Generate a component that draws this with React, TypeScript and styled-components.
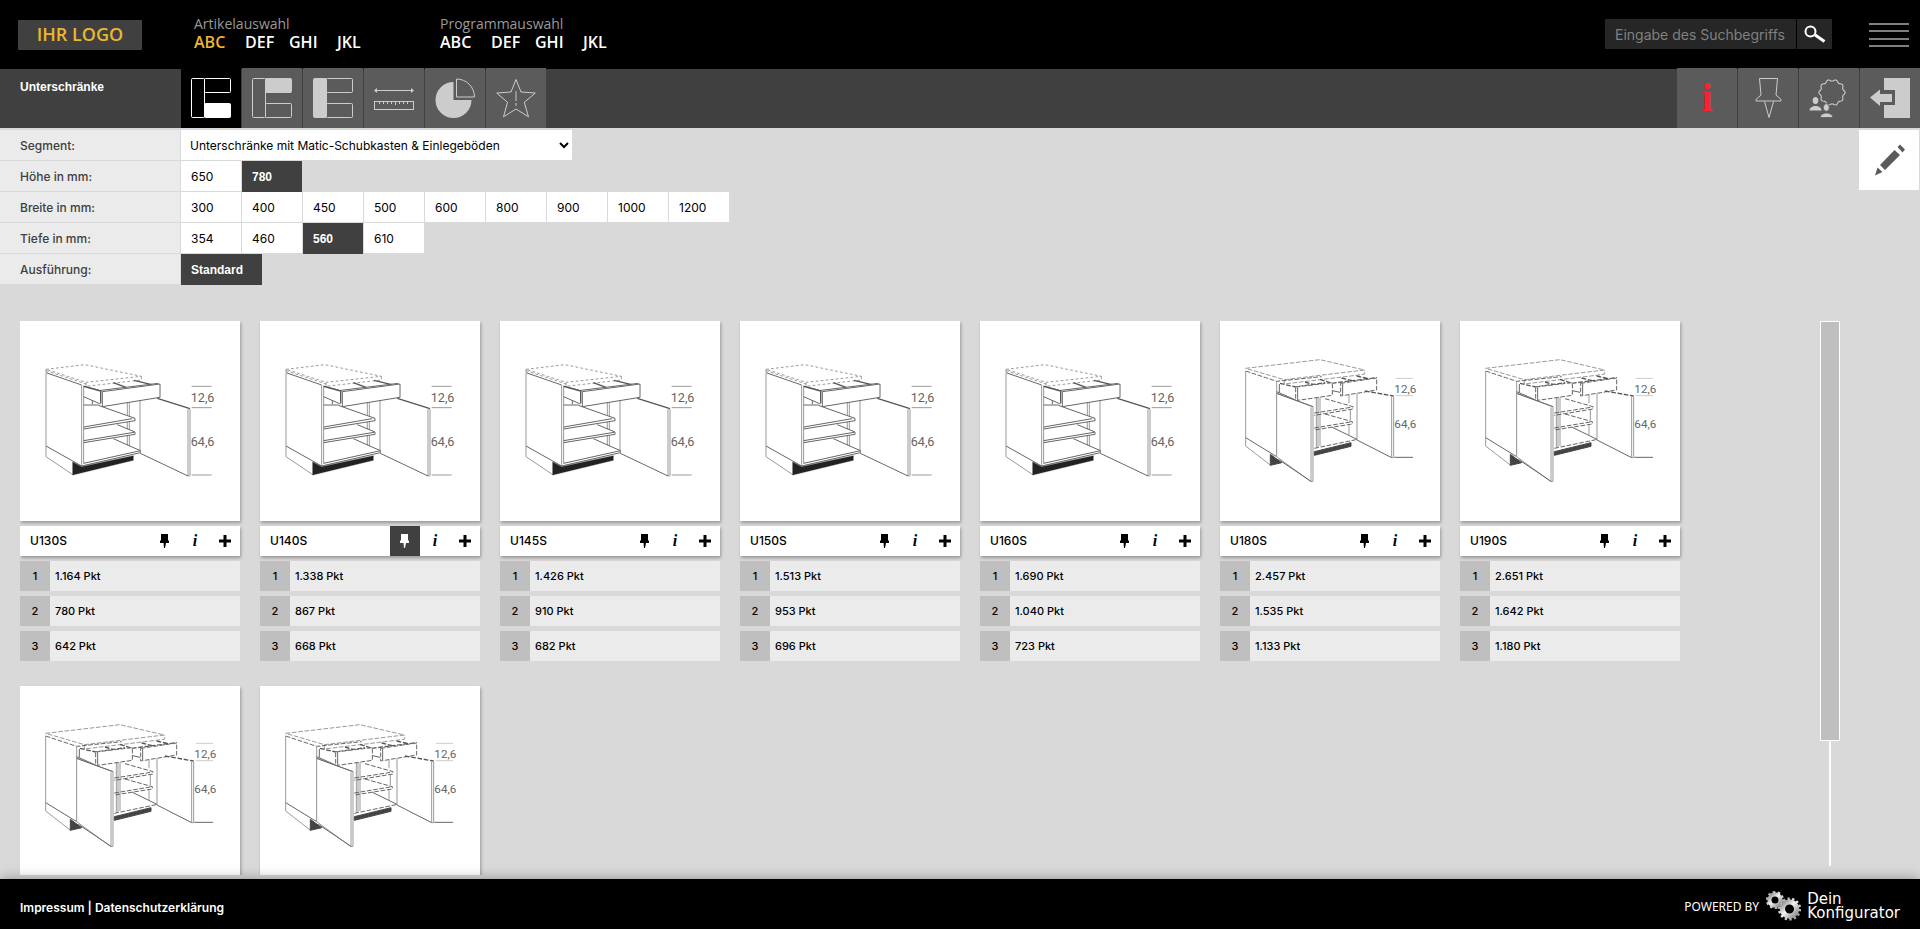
import React, { useState } from 'react';
import styled, { createGlobalStyle } from 'styled-components';

const GlobalStyle = createGlobalStyle`
  *, *::before, *::after { box-sizing: border-box; }
  body {
    margin: 0;
    background: #d9d9d9;
    color: #000;
    font-family: Inter, "Liberation Sans", sans-serif;
    font-size: 12px;
  }
  button, input, select { font: inherit; color: inherit; border: 0; border-radius: 0; margin: 0; }
  button { padding: 0; background: none; cursor: pointer; }
  svg { display: block; }
`;

const Page = styled.div`
  display: flex;
  flex-direction: column;
  height: 100vh;
  min-height: 500px;
`;

/* ---------- header ---------- */

const Header = styled.header`
  display: flex;
  align-items: flex-start;
  height: 68px;
  flex: none;
  padding: 0 11px 0 18px;
  background: #000;
  font-family: "Open Sans", sans-serif;
`;

const Logo = styled.a`
  width: 124px;
  height: 30px;
  margin: 20px 52px 0 0;
  background: #404040;
  color: #edb72c;
  font-size: 18px;
  font-weight: 600;
  line-height: 29px;
  text-align: center;
  text-decoration: none;
`;

const NavGroup = styled.nav`
  width: 246px;
  padding-top: 15px;
`;

const NavTitle = styled.div`
  color: #999;
  font-size: 14px;
  line-height: 18px;
`;

const NavLinks = styled.div`
  display: grid;
  grid-template-columns: 51px 44px 48px auto;
`;

const NavLink = styled.a<{ $active?: boolean }>`
  color: ${(p) => (p.$active ? '#edb72c' : '#fff')};
  font-size: 16px;
  font-weight: 600;
  line-height: 18px;
  text-decoration: none;
`;

const Search = styled.form`
  display: flex;
  gap: 1px;
  margin: 19px 37px 0 auto;
`;

const SearchInput = styled.input`
  width: 191px;
  height: 30px;
  padding: 0 10px;
  background: #262626;
  color: #fff;
  font-family: Inter, "Liberation Sans", sans-serif;
  font-size: 14px;
  &::placeholder { color: #808080; opacity: 1; }
`;

const SearchButton = styled.button`
  display: grid;
  place-items: center;
  width: 35px;
  height: 30px;
  background: #262626;
`;

const MenuButton = styled.button`
  display: flex;
  flex-direction: column;
  justify-content: space-between;
  width: 40px;
  height: 24px;
  margin-top: 23px;
`;

const MenuLine = styled.span`
  height: 2px;
  background: #7f7f7f;
`;

/* ---------- toolbar ---------- */

const Toolbar = styled.div`
  display: flex;
  flex: none;
  height: 60px;
  border-top: 1px solid #000;
  background: #404040;
`;

const Section = styled.h1`
  width: 181px;
  margin: 0;
  padding: 10px 0 0 20px;
  color: #fff;
  font-family: "Liberation Sans", Arial, sans-serif;
  font-size: 12px;
  line-height: 16px;
`;

const Tiles = styled.div`
  display: flex;
  gap: 1px;
  margin-top: -1px;
  & + & { margin-left: auto; }
`;

const Tile = styled.button<{ $active?: boolean }>`
  display: grid;
  place-items: center;
  width: 60px;
  height: 60px;
  background: ${(p) => (p.$active ? '#000' : '#5b5b5b')};
  color: ${(p) => (p.$active ? '#fff' : '#ccc')};
`;

const RedInfo = styled.span`
  color: #ff1f2e;
  font: bold 40px/40px "Liberation Serif", serif;
`;

/* ---------- filters ---------- */

const FilterArea = styled.div`
  display: flex;
  flex: none;
  align-items: flex-start;
  justify-content: space-between;
  padding: 2px 1px 0 0;
`;

const Filters = styled.div`
  display: flex;
  flex-direction: column;
  gap: 1px;
`;

const FilterRow = styled.div`
  display: flex;
  gap: 1px;
  height: 30px;
`;

const FilterLabel = styled.label`
  width: 180px;
  padding-left: 20px;
  background: #ebebeb;
  color: #404040;
  font-weight: 500;
  line-height: 31px;
`;

const SegmentSelect = styled.select`
  width: 391px;
  padding: 0 0 0 5px;
  background: #fff;
`;

const Option = styled.button<{ $active: boolean }>`
  min-width: 60px;
  height: ${(p) => (p.$active ? 31 : 30)}px;
  padding: 0 19px 0 10px;
  background: ${(p) => (p.$active ? '#404040' : '#fff')};
  color: ${(p) => (p.$active ? '#fff' : '#000')};
  font-family: ${(p) => (p.$active ? '"Liberation Sans", Arial, sans-serif' : 'inherit')};
  font-weight: ${(p) => (p.$active ? 'bold' : 'inherit')};
  text-align: left;
`;

const EditButton = styled.button`
  display: grid;
  place-items: center;
  width: 60px;
  height: 60px;
  background: #fff;
`;

/* ---------- products ---------- */

const Content = styled.main`
  display: flex;
  flex: 1;
  min-height: 0;
  padding: 37px 80px 0 20px;
`;

const CardList = styled.div`
  display: flex;
  flex: 1;
  flex-wrap: wrap;
  align-content: flex-start;
  gap: 25px 20px;
  margin-bottom: 4px;
  padding-right: 20px;
  overflow: hidden;
`;

const Card = styled.article`
  display: flex;
  flex-direction: column;
  gap: 5px;
  width: 220px;
  font-size: 11px;
  font-weight: 500;
`;

const Picture = styled.div`
  height: 200px;
  background: #fff;
  box-shadow: 1px 2px 3px rgba(0, 0, 0, 0.3);
`;

const CardTitle = styled.div`
  display: flex;
  height: 30px;
  padding-left: 10px;
  background: #fff;
  box-shadow: 1px 2px 3px rgba(0, 0, 0, 0.3);
`;

const CardName = styled.h2`
  flex: 1;
  margin: 0;
  font-size: 12px;
  font-weight: inherit;
  line-height: 30px;
`;

const CardButton = styled.button<{ $active?: boolean }>`
  display: grid;
  place-items: center;
  width: 30px;
  height: 30px;
  background: ${(p) => (p.$active ? '#404040' : 'transparent')};
  color: ${(p) => (p.$active ? '#fff' : '#000')};
`;

const ItalicInfo = styled.span`
  font: italic bold 16px/20px "Liberation Serif", serif;
`;

const Price = styled.div`
  display: flex;
  height: 30px;
  background: #ebebeb;
  line-height: 30px;
`;

const PriceIndex = styled.span`
  width: 30px;
  margin-right: 5px;
  background: #bfbfbf;
  text-align: center;
`;

const ScrollTrack = styled.div`
  display: flex;
  flex-direction: column;
  align-items: center;
  width: 20px;
  margin-bottom: 13px;
`;

const ScrollThumb = styled.div`
  width: 20px;
  height: 77%;
  border: 1px solid #fff;
  background: #bfbfbf;
`;

const ScrollLine = styled.div`
  flex: 1;
  width: 2px;
  background: #fff;
`;

/* ---------- footer ---------- */

const Footer = styled.footer`
  display: flex;
  flex: none;
  align-items: center;
  justify-content: space-between;
  height: 50px;
  padding: 0 20px;
  background: #000;
  box-shadow: 0 0 12px rgba(0, 0, 0, 0.35);
  color: #fff;
`;

const Legal = styled.nav`
  padding-top: 7px;
  font-size: 12px;
  font-weight: 600;
`;

const LegalLink = styled.a`
  color: #fff;
  text-decoration: none;
`;

const Powered = styled.div`
  display: flex;
  align-items: center;
  gap: 6px;
  padding-top: 4px;
  font: 12px "Noto Sans", sans-serif;
`;

const Brand = styled.span`
  display: flex;
  flex-direction: column;
  font: 15px/14px "DejaVu Sans", sans-serif;
`;

/* ---------- icons ---------- */

const Layout = ({ filled }: { filled: 'left' | 'top' | 'bottom' }) => {
  const fill = (name: string) => (name === filled ? 'currentColor' : 'none');
  return (
    <svg width="40" height="40" viewBox="0 0 40 40" stroke="currentColor" aria-hidden="true">
      <rect x="0.5" y="0.5" width="13" height="39" rx="1" fill={fill('left')} />
      <rect x="13.5" y="0.5" width="26" height="14" rx="1" fill={fill('top')} />
      <rect x="13.5" y="25.5" width="26" height="14" rx="1" fill={fill('bottom')} />
    </svg>
  );
};

const RulerIcon = () => (
  <svg width="40" height="40" viewBox="0 0 40 40" fill="none" stroke="currentColor" aria-hidden="true">
    <path d="M2 12.5h36" />
    <path d="M0 12.5l3-2.5v5zM40 12.5l-3-2.5v5z" fill="currentColor" stroke="none" />
    <rect x="0.5" y="23.5" width="39" height="8" />
    <path d="M5.5 24v2M9.5 24v2M13.5 24v2M17.5 24v2M21.5 24v3M25.5 24v2M29.5 24v2M33.5 24v2" />
  </svg>
);

const PieIcon = () => (
  <svg width="40" height="40" viewBox="0 0 40 40" aria-hidden="true">
    <path d="M18.500 4a18 18 0 1 0 18 18h-18z" fill="currentColor" />
    <path d="M21.500 1v18h18A18 18 0 0 0 21.500 1z" fill="none" stroke="currentColor" />
  </svg>
);

const StarIcon = () => (
  <svg width="40" height="40" viewBox="0 0 40 40" fill="none" stroke="currentColor" strokeLinejoin="round" aria-hidden="true">
    <path d="M20 1.500l5 12.500 14.300 1-11 9.300 4.200 14.500L20 31 7.500 38.800l4-14.500L.7 15 15 14z" />
    <path d="M20 13v10M20 25v3" strokeWidth="1.500" opacity="0.650" />
  </svg>
);

const PinOutline = () => (
  <svg width="40" height="40" viewBox="0 0 40 40" fill="none" stroke="currentColor" strokeLinejoin="round" aria-hidden="true">
    <path d="M11.500 .5h18l-1.500 16.500 5 4.500v1.500H8v-1.500l5-4.500zM16.500 23.500l4.500 16 4.500-16" />
  </svg>
);

const CommunityIcon = () => {
  const points = Array.from({ length: 100 }, (_, i) => {
    const angle = (i / 100) * Math.PI * 2;
    const radius = 12.2 + Math.cos(angle * 10) * 0.9;
    return `${(23 + radius * Math.cos(angle)).toFixed(2)},${(14.5 + radius * Math.sin(angle)).toFixed(2)}`;
  }).join(' ');
  return (
    <svg width="40" height="40" viewBox="0 0 40 40" aria-hidden="true">
      <polygon points={points} fill="none" stroke="currentColor" strokeWidth="1.100" />
      <g fill="currentColor">
        <ellipse cx="6.500" cy="22.500" rx="2.800" ry="3.500" />
        <path d="M.5 32.500c0-6 12-6 12 0z" />
        <g stroke="#5b5b5b" strokeWidth="0.800">
          <ellipse cx="17.300" cy="29.500" rx="3" ry="3.800" />
          <path d="M11.300 39.500c0-6 12.400-6 12.400 0z" />
        </g>
      </g>
    </svg>
  );
};

const ExitIcon = () => (
  <svg width="40" height="40" viewBox="0 0 40 40" fill="currentColor" aria-hidden="true">
    <path d="M14 0h26v40H14V27h11V12H14z" />
    <path d="M0 19.500L10 11.500v4.500h12v8H10v4z" />
  </svg>
);

const PencilIcon = () => (
  <svg width="40" height="40" viewBox="0 0 40 40" fill="#5b5b5b" aria-hidden="true">
    <path d="M25.500 10l5.500 5-15 15L11 25zM28.500 7l2.500-2.500L36 9.500l-2.500 3zM8.500 27.500l5 4.500-7.500 3.500z" />
  </svg>
);

const SearchIcon = () => (
  <svg width="22" height="18" viewBox="0 0 22 18" fill="none" stroke="#fff" aria-hidden="true">
    <circle cx="6.500" cy="6.500" r="5" strokeWidth="2" />
    <path d="M10.500 9.500L20.500 16.500" strokeWidth="3" />
  </svg>
);

const PinIcon = () => (
  <svg width="10" height="14" viewBox="0 0 10 14" fill="currentColor" aria-hidden="true">
    <path d="M1 0h7v6l1 1v2H6l-1 5h-1L3.500 9H0V7l1-1z" />
  </svg>
);

const PlusIcon = () => (
  <svg width="12" height="12" viewBox="0 0 12 12" fill="currentColor" aria-hidden="true">
    <path d="M4.500 0h3v4.500H12v3H7.500V12h-3V7.500H0v-3h4.500z" />
  </svg>
);

const Gear = ({ x, y, r, teeth }: { x: number; y: number; r: number; teeth: number }) => (
  <g transform={`translate(${x} ${y})`} fill="none" stroke="url(#metal)">
    <circle r={r * 0.62} strokeWidth={r * 0.46} />
    <circle r={r * 0.9} strokeWidth={r * 0.22} strokeDasharray={`${(r * 0.9 * Math.PI) / teeth} ${(r * 0.9 * Math.PI) / teeth}`} />
  </g>
);

const Gears = () => (
  <svg width="36" height="32" viewBox="0 0 36 32" aria-hidden="true">
    <defs>
      <linearGradient id="metal" x1="0" y1="0" x2="1" y2="1">
        <stop offset="0" stopColor="#888" />
        <stop offset="0.450" stopColor="#f4f4f4" />
        <stop offset="1" stopColor="#888" />
      </linearGradient>
    </defs>
    <Gear x={10} y={10} r={9} teeth={10} />
    <Gear x={24.5} y={19} r={11.5} teeth={14} />
  </svg>
);

/* ---------- cabinet drawings ---------- */

const Drawing = styled.svg`
  width: 220px;
  height: 200px;
  fill: none;
  stroke: #666;
  stroke-width: 3;
  stroke-linejoin: round;

  .soft { stroke: #999; }
  .dash { stroke: #999; stroke-dasharray: 8 7; }
  .broken { stroke-dasharray: 14 5; }
  .dark { stroke: #555; stroke-width: 4; }
  .face { fill: #fff; }
  text { fill: #666; stroke: none; font-family: Roboto, sans-serif; font-weight: 400; }
`;

const SingleCabinet = () => (
  <Drawing viewBox="0 0 660 600" role="img" aria-label="Unterschrank mit einer Tür">
    <g transform="translate(30 57)">
      <path className="dash" d="M48 88L165 74L334 109L168 127zM48 88V98M334 109V120L168 139V127M48 92L168 132" />
      <path d="M48 98L155 135" />
      <path className="soft" d="M48 98V350L130 405M155 135V378M161 138V370" />
      <path d="M48 318L155 378L331 338V331" />
      <path d="M128 366V405L310 361V347L155 380z" fill="#222" stroke="#222" strokeWidth="1" />
      <path className="soft" d="M292 188V225M298 188V228M292 246V268M298 246V270M292 287V316M298 287V318M330 182V332" />
      <path d="M205 196L315 235V242L161 267M161 261L306 236M262 254L315 276V283L161 308M161 302L312 277M250 296L331 332L161 370" />
      <path d="M161 138L215 153M161 170L211 192M187 180V193M161 195H205" />
      <path className="dark" d="M161 139L212 153V190M312 121L365 134M250 128L288 142" />
      <path className="face" d="M217 155L390 132V172L217 200z" />
      <path d="M205 152L385 130" />
      <path className="soft" d="M480 207V407L474 408V207" />
      <path className="dark" d="M382 175L480 206" />
      <path d="M331 340L474 408" />
      <path className="soft" d="M485 139H545M485 203H545M485 405H545" />
      <text x="482" y="187" fontSize="38">12,6</text>
      <text x="482" y="317" fontSize="38">64,6</text>
    </g>
  </Drawing>
);

const DoubleCabinet = () => (
  <Drawing viewBox="0 0 660 600" role="img" aria-label="Unterschrank mit zwei Türen">
    <g transform="translate(15 57)">
      <path className="broken soft" d="M62 85L285 59L418 90L178 119zM178 119V132L418 103V90" />
      <path className="broken" d="M62 93L155 124L290 110" />
      <path className="soft" d="M62 93V318L137 376M155 124V350" />
      <path d="M62 293L155 350" />
      <path d="M136 343V376L170 368z" fill="#444" stroke="#444" />
      <path d="M268 335L378 308V319L268 346z" fill="#444" stroke="#444" />
      <path className="soft" d="M274 172V322M279 172V322M285 172V318M396 160V300M372 165V190M376 210V240M372 256V284" />
      <path className="broken" d="M300 176L384 200V207L268 226M268 219L378 202M300 222L382 245V252L268 270M268 264L376 246M268 325L398 298" />
      <path d="M322 262L396 298" />
      <path className="dark broken" d="M165 130L212 141L300 128M240 126L265 134M285 118L320 130L455 113M350 114L385 123M395 108L430 116" />
      <path d="M163 132V158M155 155L212 180" />
      <path className="face broken" d="M212 141L322 128V166L212 182z" />
      <path className="face broken" d="M347 130L455 114V150L347 168z" />
      <path d="M322 152L345 157M218 142V180M353 130V166" />
      <path className="face" d="M155 160L264 200V424L258 425L155 350z" stroke="#999" />
      <path d="M155 160L264 200M160 358L258 424" />
      <path className="soft" d="M258 202V424" />
      <path className="dark broken" d="M420 153L506 168" />
      <path className="soft" d="M500 169V353H506V169" />
      <path d="M396 300L500 353M508 352H564" />
      <path d="M512 115H564M512 167H564" stroke="#ccc" />
      <text x="508" y="159" fontSize="35">12,6</text>
      <text x="508" y="265" fontSize="35">64,6</text>
    </g>
  </Drawing>
);

/* ---------- data ---------- */

const filters = [
  { label: 'Höhe in mm:', options: ['650', '780'], selected: '780' },
  { label: 'Breite in mm:', options: ['300', '400', '450', '500', '600', '800', '900', '1000', '1200'], selected: '' },
  { label: 'Tiefe in mm:', options: ['354', '460', '560', '610'], selected: '560' },
  { label: 'Ausführung:', options: ['Standard'], selected: 'Standard' },
];

const products = [
  { name: 'U130S', prices: ['1.164', '780', '642'] },
  { name: 'U140S', prices: ['1.338', '867', '668'], pinned: true },
  { name: 'U145S', prices: ['1.426', '910', '682'] },
  { name: 'U150S', prices: ['1.513', '953', '696'] },
  { name: 'U160S', prices: ['1.690', '1.040', '723'] },
  { name: 'U180S', prices: ['2.457', '1.535', '1.133'], double: true },
  { name: 'U190S', prices: ['2.651', '1.642', '1.180'], double: true },
  { name: '', prices: [], double: true },
  { name: '', prices: [], double: true },
];

const codes = ['ABC', 'DEF', 'GHI', 'JKL'];

const Navigation = ({ title, active }: { title: string; active?: string }) => (
  <NavGroup aria-label={title}>
    <NavTitle>{title}</NavTitle>
    <NavLinks>
      {codes.map((code) => (
        <NavLink key={code} href="#" $active={code === active}>{code}</NavLink>
      ))}
    </NavLinks>
  </NavGroup>
);

const FilterGroup = ({ label, options, selected }: (typeof filters)[number]) => {
  const [value, setValue] = useState(selected);
  return (
    <FilterRow role="group" aria-label={label}>
      <FilterLabel as="span">{label}</FilterLabel>
      {options.map((option) => (
        <Option key={option} type="button" $active={option === value} aria-pressed={option === value} onClick={() => setValue(option)}>
          {option}
        </Option>
      ))}
    </FilterRow>
  );
};

const ProductCard = ({ name, prices, double, pinned = false }: (typeof products)[number]) => {
  const [isPinned, setPinned] = useState(pinned);
  return (
    <Card>
      <Picture>{double ? <DoubleCabinet /> : <SingleCabinet />}</Picture>
      {name && (
        <CardTitle>
          <CardName>{name}</CardName>
          <CardButton type="button" aria-label="Merken" $active={isPinned} onClick={() => setPinned(!isPinned)}><PinIcon /></CardButton>
          <CardButton type="button" aria-label="Information"><ItalicInfo>i</ItalicInfo></CardButton>
          <CardButton type="button" aria-label="Hinzufügen"><PlusIcon /></CardButton>
        </CardTitle>
      )}
      {prices.map((price, i) => (
        <Price key={i}><PriceIndex>{i + 1}</PriceIndex>{price} Pkt</Price>
      ))}
    </Card>
  );
};

export default function App() {
  return (
    <Page>
      <GlobalStyle />
      <Header>
        <Logo href="#">IHR LOGO</Logo>
        <Navigation title="Artikelauswahl" active="ABC" />
        <Navigation title="Programmauswahl" />
        <Search onSubmit={(e) => e.preventDefault()}>
          <SearchInput aria-label="Suche" placeholder="Eingabe des Suchbegriffs" />
          <SearchButton aria-label="Suchen"><SearchIcon /></SearchButton>
        </Search>
        <MenuButton type="button" aria-label="Menü">
          <MenuLine /><MenuLine /><MenuLine /><MenuLine />
        </MenuButton>
      </Header>

      <Toolbar>
        <Section>Unterschränke</Section>
        <Tiles>
          <Tile $active aria-label="Unterschränke"><Layout filled="bottom" /></Tile>
          <Tile aria-label="Oberschränke"><Layout filled="top" /></Tile>
          <Tile aria-label="Hochschränke"><Layout filled="left" /></Tile>
          <Tile aria-label="Maße"><RulerIcon /></Tile>
          <Tile aria-label="Auswertung"><PieIcon /></Tile>
          <Tile aria-label="Favoriten"><StarIcon /></Tile>
        </Tiles>
        <Tiles>
          <Tile aria-label="Information"><RedInfo>i</RedInfo></Tile>
          <Tile aria-label="Merkliste"><PinOutline /></Tile>
          <Tile aria-label="Benutzer"><CommunityIcon /></Tile>
          <Tile aria-label="Abmelden"><ExitIcon /></Tile>
        </Tiles>
      </Toolbar>

      <FilterArea>
        <Filters>
          <FilterRow>
            <FilterLabel htmlFor="segment">Segment:</FilterLabel>
            <SegmentSelect id="segment">
              <option>Unterschränke mit Matic-Schubkasten &amp; Einlegeböden</option>
            </SegmentSelect>
          </FilterRow>
          {filters.map((filter) => <FilterGroup key={filter.label} {...filter} />)}
        </Filters>
        <EditButton type="button" aria-label="Bearbeiten"><PencilIcon /></EditButton>
      </FilterArea>

      <Content>
        <CardList>
          {products.map((product, i) => <ProductCard key={i} {...product} />)}
        </CardList>
        <ScrollTrack>
          <ScrollThumb />
          <ScrollLine />
        </ScrollTrack>
      </Content>

      <Footer>
        <Legal>
          <LegalLink href="#">Impressum</LegalLink> | <LegalLink href="#">Datenschutzerklärung</LegalLink>
        </Legal>
        <Powered>
          POWERED BY
          <Gears />
          <Brand><span>Dein</span><span>Konfigurator</span></Brand>
        </Powered>
      </Footer>
    </Page>
  );
}
